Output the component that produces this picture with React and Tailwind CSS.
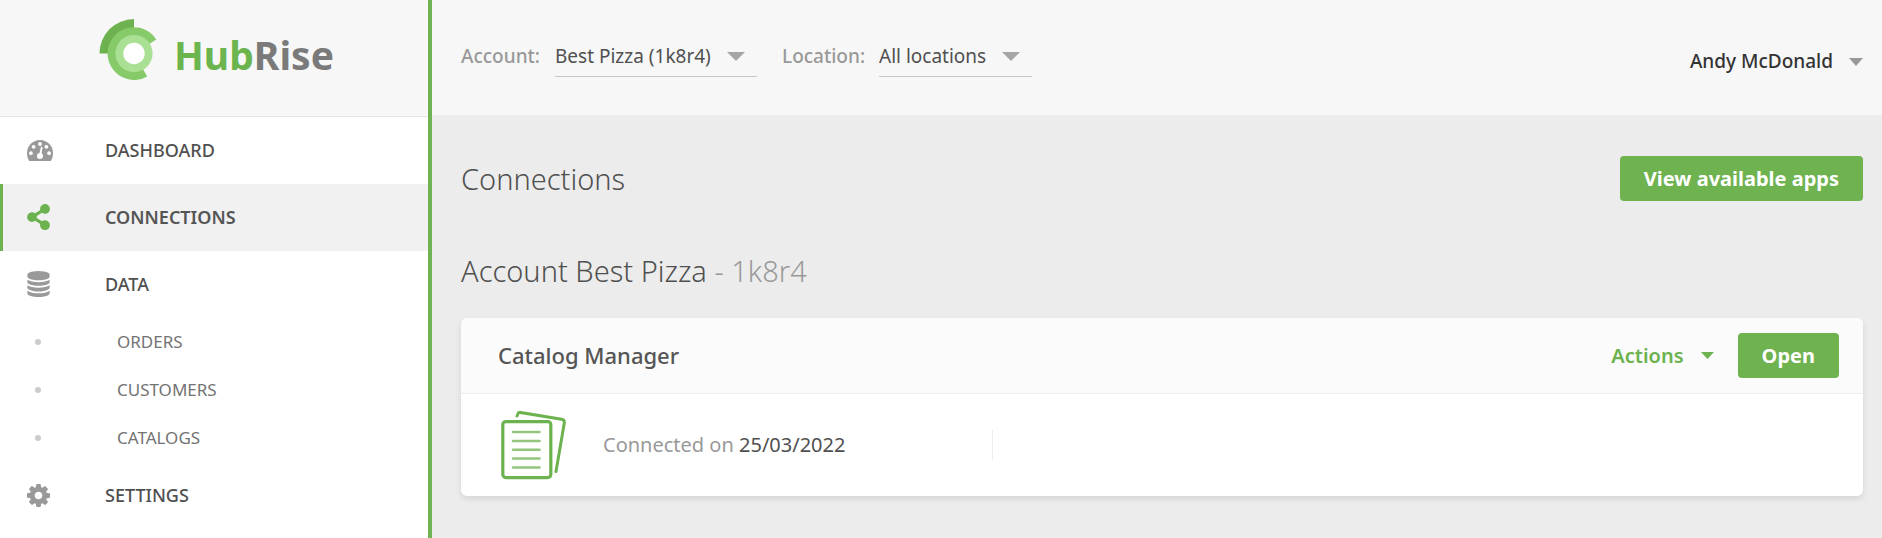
import { FaShareAlt } from "react-icons/fa";

function Logo() {
  return (
    <a href="#home" aria-label="HubRise" className="flex items-end gap-[17px]">
      <svg width="58" height="62" viewBox="0 0 58 62" aria-hidden="true">
        <path d="M35 34.5V0A34.5 34.5 0 0 0 .5 34.5Z" fill="#6db24f" />
        <path d="M35 34.5L57.3 20.4A26.4 26.4 0 1 0 48.2 57.4Z" fill="#86ca6a" />
        <circle cx="35" cy="34.5" r="18.6" fill="#a9e094" />
        <circle cx="35" cy="34.5" r="10.7" fill="#fff" />
      </svg>
      <span className="text-[39px] leading-[52px] font-bold text-[#6cb44e]">
        Hub<span className="text-[#7a7a7a]">Rise</span>
      </span>
    </a>
  );
}

function Caret({ className }) {
  return (
    <svg viewBox="0 0 16 8" preserveAspectRatio="none" aria-hidden="true" className={className}>
      <path d="M0 0H16L8 8Z" fill="currentColor" />
    </svg>
  );
}

function NavItem({ icon: Icon, label, active, iconClass }) {
  return (
    <a
      href={"#" + label.toLowerCase()}
      aria-current={active ? "page" : undefined}
      className={
        active
          ? "flex h-[67px] items-center border-l-[3px] border-[#6cb24f] bg-[#f1f1f1] pb-px pl-6 text-lg font-semibold text-[#555]"
          : "flex h-[67px] items-center border-l-[3px] border-transparent pb-px pl-6 text-lg font-medium text-[#505050]"
      }
    >
      <span className="flex w-[78px] shrink-0">
        <Icon className={iconClass} />
      </span>
      {label}
    </a>
  );
}

function SubItem({ label }) {
  return (
    <a href={"#" + label.toLowerCase()} className="flex h-12 items-center pl-[35px] text-[17px] text-[#737373]">
      <span className="mr-[76px] size-[6px] rounded-full bg-[#ccc]" />
      {label}
    </a>
  );
}

function Gauge({ className }) {
  return (
    <svg viewBox="0 0 26 21" className={className} aria-hidden="true">
      <path d="M2.2 21C.8 19 0 16 0 13a13 13 0 0 1 26 0c0 3-.8 6-2.2 8Z" fill="currentColor" />
      <g fill="#fff">
        <circle cx="13" cy="4" r="1.9" />
        <circle cx="6.6" cy="6.8" r="1.9" />
        <circle cx="19.4" cy="6.8" r="1.9" />
        <circle cx="3.9" cy="13.2" r="1.9" />
        <circle cx="22.1" cy="13.2" r="1.9" />
        <circle cx="13" cy="16" r="3" />
        <path d="M14 6.8L15.6 7.2 14.3 15H12Z" />
      </g>
    </svg>
  );
}

function Database({ className }) {
  return (
    <svg viewBox="0 0 1536 1792" className={className} fill="currentColor" aria-hidden="true">
      <path d="M768 768q237 0 443-43t325-127v170q0 69-103 128t-280 93.5-385 34.5-385-34.5-280-93.5-103-128v-170q119 84 325 127t443 43zm0 768q237 0 443-43t325-127v170q0 69-103 128t-280 93.5-385 34.5-385-34.5-280-93.5-103-128v-170q119 84 325 127t443 43zm0-384q237 0 443-43t325-127v170q0 69-103 128t-280 93.5-385 34.5-385-34.5-280-93.5-103-128v-170q119 84 325 127t443 43zm0-1152q208 0 385 34.5t280 93.5 103 128v128q0 69-103 128t-280 93.5-385 34.5-385-34.5-280-93.5-103-128v-128q0-69 103-128t280-93.5 385-34.5z" />
    </svg>
  );
}

function Cog({ className }) {
  return (
    <svg viewBox="0 -128 1536 1536" className={className} fill="currentColor" aria-hidden="true">
      <path d="M1024 640q0-106-75-181t-181-75-181 75-75 181 75 181 181 75 181-75 75-181zm512-109v222q0 12-8 23t-20 13l-185 28q-19 54-39 91 35 50 107 138 10 12 10 25t-9 23q-27 37-99 108t-94 71q-12 0-26-9l-138-108q-44 23-91 38-16 136-29 186-7 28-36 28h-222q-14 0-24.5-8.5t-11.5-21.5l-28-184q-49-16-90-37l-141 107q-10 9-25 9-14 0-25-11-126-114-165-168-7-10-7-23 0-12 8-23 15-21 51-66.5t54-70.5q-27-50-41-99l-183-27q-13-2-21-12.5t-8-23.5v-222q0-12 8-23t19-13l186-28q14-46 39-92-40-57-107-138-10-12-10-24 0-10 9-23 26-36 98.5-107.5t94.5-71.5q13 0 26 10l138 107q44-23 91-38 16-136 29-186 7-28 36-28h222q14 0 24.5 8.5t11.5 21.5l28 184q49 16 90 37l142-107q9-9 24-9 13 0 25 10 129 119 165 170 7 8 7 22 0 12-8 23-15 21-51 66.5t-54 70.5q26 50 41 98l183 28q13 2 21 12.5t8 23.5z" />
    </svg>
  );
}

function Picker({ id, label, value, labelClass, className }) {
  return (
    <div className="flex items-center">
      <label htmlFor={id} className={labelClass}>
        {label}
      </label>
      <div className={className}>
        <select id={id} className="h-10 min-w-0 flex-1 appearance-none bg-transparent text-[19px] text-[#505050] outline-none">
          <option>{value}</option>
        </select>
        <Caret className="mr-3 h-[9px] w-[18px] shrink-0 text-[#a6a6a6]" />
      </div>
    </div>
  );
}

function Documents() {
  return (
    <svg width="66" height="69" viewBox="0 0 66 69" fill="none" stroke="#6cb24f" strokeLinecap="round" aria-hidden="true">
      <rect x="1.8" y="10.6" width="48" height="56" rx="3" strokeWidth="3.2" />
      <path d="M16 5L17.2 2.3Q17.8 1.2 19.2 1.4L60.5 8.2Q63.8 8.9 63.3 12L55 60.5" strokeWidth="3" />
      <path d="M12 21H38.5M12 30H38.5M12 38.7H38.5M12 47.5H38.5M12 56.5H38.5" stroke="#93c67c" strokeWidth="2.6" />
    </svg>
  );
}

export default function App() {
  return (
    <div className="flex min-h-screen bg-[#ececec] font-['Noto_Sans',sans-serif]">
      <aside className="w-[432px] shrink-0 border-r-4 border-[#6fb352] bg-white">
        <div className="flex h-[117px] items-start border-b border-[#e4e4e4] bg-[#f7f7f7] pt-[19px] pl-[99px]">
          <Logo />
        </div>
        <nav>
          <NavItem icon={Gauge} label="DASHBOARD" iconClass="h-[21px] w-[26px] text-[#999]" />
          <NavItem icon={FaShareAlt} label="CONNECTIONS" active iconClass="h-[26px] w-[23px] text-[#6cb24f]" />
          <NavItem icon={Database} label="DATA" iconClass="h-[26px] w-[23px] text-[#999]" />
          <SubItem label="ORDERS" />
          <SubItem label="CUSTOMERS" />
          <SubItem label="CATALOGS" />
          <NavItem icon={Cog} label="SETTINGS" iconClass="size-[23px] text-[#999]" />
        </nav>
      </aside>

      <div className="min-w-0 flex-1">
        <header className="flex h-[115px] items-center justify-between bg-[#f7f7f7] pr-[19px] pl-[29px]">
          <div className="flex items-center gap-[25px] pb-[2px]">
            <Picker
              id="account"
              label="Account:"
              value="Best Pizza (1k8r4)"
              labelClass="w-[94px] text-[19px] font-medium text-[#999]"
              className="flex w-[202px] items-center border-b border-[#c8c8c8]"
            />
            <Picker
              id="location"
              label="Location:"
              value="All locations"
              labelClass="w-[97px] text-[19px] font-medium text-[#999]"
              className="flex w-[153px] items-center border-b border-[#c8c8c8]"
            />
          </div>
          <button type="button" className="flex items-center gap-4 pt-2 text-[19px] font-medium text-[#333]">
            Andy McDonald
            <Caret className="h-2 w-[14px] text-[#999]" />
          </button>
        </header>

        <main className="pt-[41px] pr-[19px] pl-[29px]">
          <div className="flex items-center justify-between">
            <h1 className="text-[29px] leading-9 font-light text-[#505050]">Connections</h1>
            <button type="button" className="h-[45px] rounded-[4px] bg-[#6fb250] px-6 text-xl font-bold text-white">
              View available apps
            </button>
          </div>
          <h2 className="mt-[52px] text-[29px] leading-9 font-light text-[#505050]">
            Account Best Pizza <span className="text-[#999]">- 1k8r4</span>
          </h2>
          <section className="mt-[29px] overflow-hidden rounded-md bg-white shadow-[0_3px_6px_rgba(0,0,0,0.1)]">
            <div className="flex h-[76px] items-center justify-between border-b border-[#eee] bg-[#fbfbfb] pr-6 pl-[37px]">
              <h3 className="text-[22px] font-medium text-[#555]">Catalog Manager</h3>
              <div className="flex items-center gap-6">
                <button type="button" className="flex items-center gap-[17px] text-xl font-semibold text-[#6cb24f]">
                  Actions
                  <Caret className="h-[7px] w-[13px]" />
                </button>
                <button type="button" className="h-[45px] rounded-[4px] bg-[#6fb250] px-6 text-xl font-bold text-white">
                  Open
                </button>
              </div>
            </div>
            <div className="flex h-[102px] items-center pl-10">
              <Documents />
              <p className="ml-9 w-[390px] border-r border-[#eee] text-xl leading-[30px] text-[#999]">
                Connected on <span className="text-[#505050]">25/03/2022</span>
              </p>
            </div>
          </section>
        </main>
      </div>
    </div>
  );
}
